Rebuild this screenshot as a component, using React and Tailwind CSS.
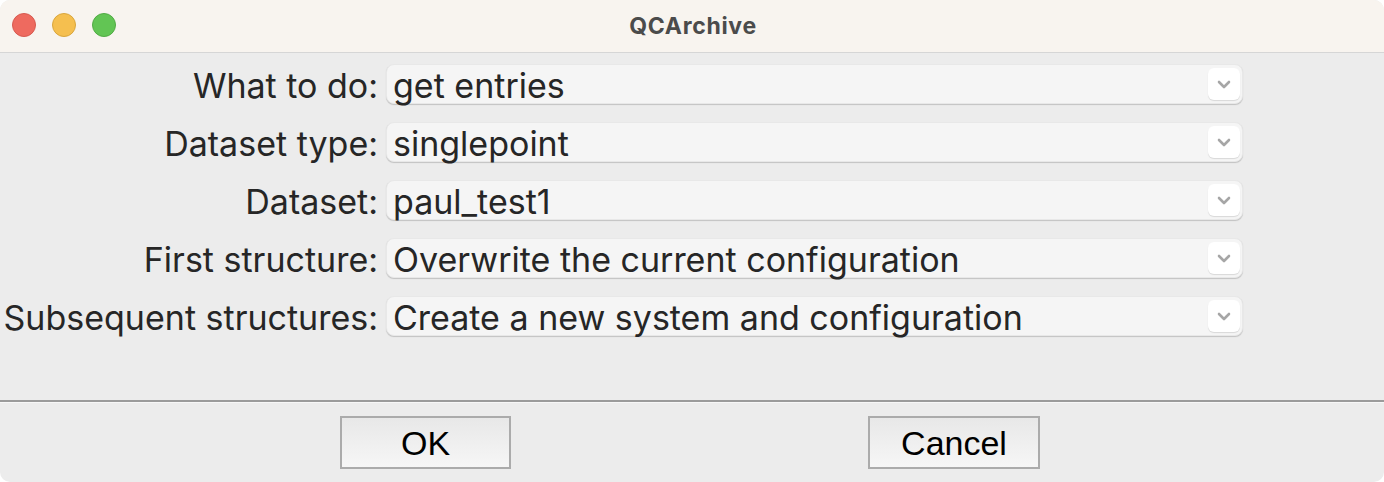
import React from "react";

const rows = [
  ["What to do:", "get entries"],
  ["Dataset type:", "singlepoint"],
  ["Dataset:", "paul_test1"],
  ["First structure:", "Overwrite the current configuration"],
  ["Subsequent structures:", "Create a new system and configuration"],
];

function Chevron() {
  return (
    <svg width="14" height="9" viewBox="0 0 14 9" fill="none">
      <path d="M2 2 L7 7 L12 2" stroke="#a6a6a6" strokeWidth="2.6" strokeLinecap="round" strokeLinejoin="round" />
    </svg>
  );
}

function Combo({ value }) {
  return (
    <div className="h-[40px] w-[857px] rounded-[8px] bg-[#f5f5f5] border border-[#e8e8e8] shadow-[0_1px_1px_rgba(0,0,0,0.18)] flex items-center pl-[6px] pr-[2px]">
      <span className="flex-1 text-[34px] leading-none text-[#262626] pt-[3px]">{value}</span>
      <div className="w-[32px] h-[32px] rounded-[6px] bg-white shadow-[0_1px_1px_rgba(0,0,0,0.12)] flex items-center justify-center">
        <Chevron />
      </div>
    </div>
  );
}

export default function App() {
  return (
    <div className="w-[1384px] h-[482px] bg-white" style={{ fontFamily: "Inter, 'Noto Sans', sans-serif" }}>
      <div className="w-full h-full rounded-[10px] overflow-hidden flex flex-col bg-[#ececec]">
        <div className="h-[53px] shrink-0 bg-[#f8f4ef] border-b border-[#d6d6d6] relative flex items-center justify-center">
          <div className="absolute left-[12px] top-[13px] flex gap-[16px]">
            <div className="w-[24px] h-[24px] rounded-full bg-[#ee6a5f] border border-[#d75a50]" />
            <div className="w-[24px] h-[24px] rounded-full bg-[#f5bf4f] border border-[#d9a63d]" />
            <div className="w-[24px] h-[24px] rounded-full bg-[#62c554] border border-[#52ab45]" />
          </div>
          <span className="text-[23px] font-bold text-[#4b4b4b] tracking-[0.7px] pl-[2px]">QCArchive</span>
        </div>
        <div className="flex-1 flex flex-col">
          <div className="grid grid-cols-[378px_857px] gap-x-[8px] gap-y-[18px] pt-[11px] items-center">
            {rows.map(([label, value]) => (
              <React.Fragment key={label}>
                <div className="text-right text-[34px] leading-none text-[#262626] whitespace-nowrap pt-[3px]">{label}</div>
                <Combo value={value} />
              </React.Fragment>
            ))}
          </div>
          <div className="flex-1" />
          <div className="h-[2px] bg-[#9b9b9b]" />
          <div className="h-[1px] bg-[#f7f7f7]" />
          <div className="flex justify-center gap-[357px] pt-[13px] pb-[13px] pr-[4px]">
            <button className="w-[171px] h-[53px] border-2 border-[#ababab] bg-gradient-to-b from-[#e8e8e8] to-[#f6f6f6] text-[34px] text-black leading-none" style={{ fontFamily: "'Liberation Sans', Arial, sans-serif" }}>OK</button>
            <button className="w-[172px] h-[53px] border-2 border-[#ababab] bg-gradient-to-b from-[#e8e8e8] to-[#f6f6f6] text-[34px] text-black leading-none" style={{ fontFamily: "'Liberation Sans', Arial, sans-serif" }}>Cancel</button>
          </div>
        </div>
      </div>
    </div>
  );
}
